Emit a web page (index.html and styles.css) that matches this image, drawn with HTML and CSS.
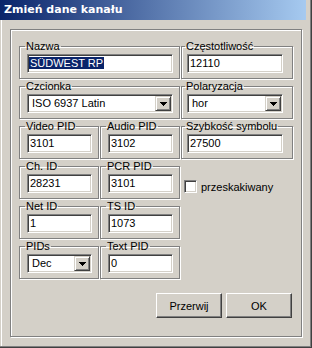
FILE: index.html
```html
<!DOCTYPE html>
<html lang="pl">
<head>
    <meta charset="UTF-8">
    <title>Zmień dane kanału</title>
    <link rel="stylesheet" href="styles.css">
</head>
<body>
    <div class="window">
        <div class="titlebar">Zmień dane kanału</div>

        <div class="panel">
            <div class="fields">
                <fieldset class="group wide">
                    <legend>Nazwa</legend>
                    <div class="edit"><span class="selected">SÜDWEST RP</span></div>
                </fieldset>
                <fieldset class="group side">
                    <legend>Częstotliwość</legend>
                    <div class="edit">12110</div>
                </fieldset>

                <fieldset class="group wide">
                    <legend>Czcionka</legend>
                    <div class="combo">
                        <span class="combo-text">ISO 6937 Latin</span>
                        <span class="drop"><svg width="7" height="4" viewBox="0 0 7 4"><polygon points="0,0 7,0 3.5,4" fill="#000"/></svg></span>
                    </div>
                </fieldset>
                <fieldset class="group side">
                    <legend>Polaryzacja</legend>
                    <div class="combo">
                        <span class="combo-text">hor</span>
                        <span class="drop"><svg width="7" height="4" viewBox="0 0 7 4"><polygon points="0,0 7,0 3.5,4" fill="#000"/></svg></span>
                    </div>
                </fieldset>

                <fieldset class="group">
                    <legend>Video PID</legend>
                    <div class="edit">3101</div>
                </fieldset>
                <fieldset class="group">
                    <legend>Audio PID</legend>
                    <div class="edit">3102</div>
                </fieldset>
                <fieldset class="group side">
                    <legend>Szybkość symbolu</legend>
                    <div class="edit">27500</div>
                </fieldset>

                <fieldset class="group">
                    <legend>Ch. ID</legend>
                    <div class="edit">28231</div>
                </fieldset>
                <fieldset class="group">
                    <legend>PCR PID</legend>
                    <div class="edit">3101</div>
                </fieldset>
                <label class="check">
                    <span class="check-box"></span>
                    <span>przeskakiwany</span>
                </label>

                <fieldset class="group">
                    <legend>Net ID</legend>
                    <div class="edit">1</div>
                </fieldset>
                <fieldset class="group">
                    <legend>TS ID</legend>
                    <div class="edit">1073</div>
                </fieldset>
                <div></div>

                <fieldset class="group">
                    <legend>PIDs</legend>
                    <div class="combo">
                        <span class="combo-text">Dec</span>
                        <span class="drop"><svg width="7" height="4" viewBox="0 0 7 4"><polygon points="0,0 7,0 3.5,4" fill="#000"/></svg></span>
                    </div>
                </fieldset>
                <fieldset class="group">
                    <legend>Text PID</legend>
                    <div class="edit">0</div>
                </fieldset>
            </div>

            <div class="buttons">
                <button class="btn">Przerwij</button>
                <button class="btn">OK</button>
            </div>
        </div>
    </div>
</body>
</html>
```

FILE: styles.css
```css
body {
    margin: 0;
    background-color: #d4d0c8;
    font-family: "Liberation Sans", Arial, sans-serif;
    font-size: 11px;
    color: #000;
}
.window {
    width: 312px;
    height: 348px;
    box-sizing: border-box;
    border-right: 1px solid #404040;
    border-bottom: 1px solid #404040;
    box-shadow: inset -1px -1px 0 #808080, inset 1px 0 0 #d4d0c8, inset 2px 0 0 #fff;
}
.titlebar {
    height: 20px;
    margin-right: 5px;
    padding-left: 4px;
    background: linear-gradient(to right, #0a246a, #a6caf0);
    color: white;
    font-family: "DejaVu Sans", sans-serif;
    font-weight: bold;
    font-size: 11px;
    line-height: 20px;
}
.panel {
    width: 292px;
    height: 308px;
    box-sizing: border-box;
    margin: 9px 0 0 10px;
    padding: 10px 8px 0 8px;
    border: 1px solid #808080;
    box-shadow: inset 1px 1px 0 #fff, 1px 1px 0 #fff;
}
.fields {
    display: grid;
    grid-template-columns: 80px 80px 112px;
    grid-auto-rows: 39px;
    gap: 1px;
}
.group {
    margin: 0;
    padding: 1px 6px 0 7px;
    min-width: 0;
    border: 1px solid #808080;
    box-shadow: inset 1px 1px 0 #fff, 1px 1px 0 #fff;
}
.group.wide {
    grid-column: span 2;
}
.group.side {
    padding: 1px 9px 0 5px;
}
.group legend {
    margin-left: -2px;
    padding: 0 1px;
    line-height: 13px;
}
.edit, .combo {
    height: 19px;
    box-sizing: border-box;
    border: 1px solid;
    border-color: #808080 #fff #fff #808080;
    box-shadow: inset 1px 1px 0 #404040, inset -1px -1px 0 #d4d0c8;
    background: white;
    line-height: 13px;
    white-space: nowrap;
    overflow: hidden;
}
.edit {
    padding: 2px 0 0 2px;
}
.selected {
    margin-left: -1px;
    padding: 0 1px;
    background-color: #0a246a;
    color: white;
}
.combo {
    display: flex;
}
.combo-text {
    flex: 1;
    padding: 2px 0 0 4px;
}
.drop {
    width: 16px;
    height: 15px;
    box-sizing: border-box;
    margin: 1px 1px 1px 0;
    display: flex;
    align-items: center;
    justify-content: center;
    background: #d4d0c8;
    border: 1px solid;
    border-color: #d4d0c8 #404040 #404040 #d4d0c8;
    box-shadow: inset 1px 1px 0 #fff, inset -1px -1px 0 #808080;
}
.drop svg {
    display: block;
    shape-rendering: crispEdges;
}
.check {
    display: flex;
    align-items: center;
    gap: 4px;
    padding: 20px 0 0 3px;
    align-self: start;
}
.check-box {
    width: 13px;
    height: 13px;
    box-sizing: border-box;
    border: 1px solid;
    border-color: #808080 #fff #fff #808080;
    box-shadow: inset 1px 1px 0 #404040, inset -1px -1px 0 #d4d0c8;
    background: white;
}
.buttons {
    display: flex;
    justify-content: flex-end;
    gap: 4px;
    margin: 14px 1px 0 0;
}
.btn {
    width: 66px;
    height: 25px;
    padding: 0;
    background: #d4d0c8;
    border: 1px solid;
    border-color: #fff #404040 #404040 #fff;
    box-shadow: inset -1px -1px 0 #808080;
    font-family: "Liberation Sans", Arial, sans-serif;
    font-size: 11px;
    color: #000;
}
```
